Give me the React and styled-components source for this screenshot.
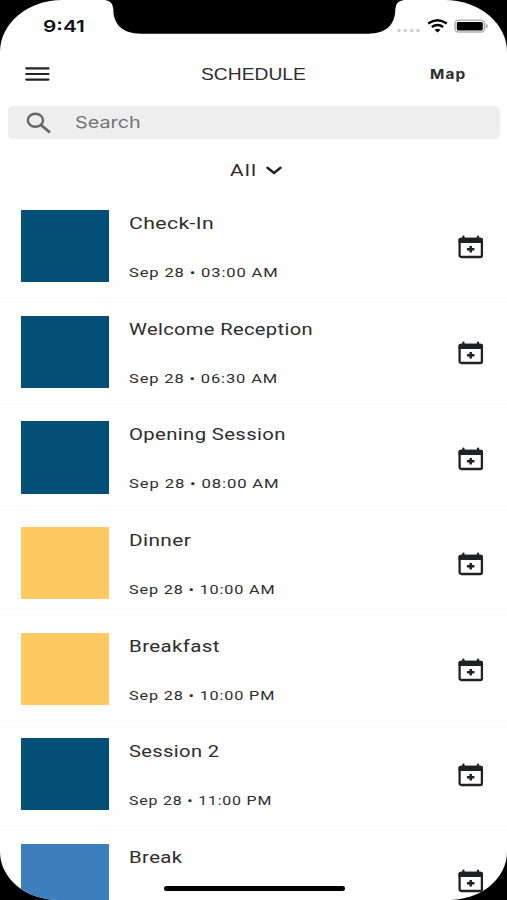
import React, { useLayoutEffect, useRef, useState } from 'react';
import styled, { createGlobalStyle } from 'styled-components';

const GlobalStyle = createGlobalStyle`
  * { box-sizing: border-box; }
  html, body { margin: 0; background: #000; overflow: hidden; }
`;

const Device = styled.div`
  position: relative;
  width: 507px;
  height: 900px;
  background: #000;
  overflow: hidden;
`;

const Screen = styled.main`
  display: flex;
  flex-direction: column;
  width: 507px;
  height: 900px;
  overflow: hidden;
  border-radius: 62px 62px 58px 58px / 52px 52px 48px 48px;
  background: #fefefe;
  color: #2d2d2d;
  font-family: Roboto, "Liberation Sans", sans-serif;
`;

const StatusBar = styled.header`
  display: flex;
  flex: none;
  justify-content: space-between;
  height: 52px;
  padding: 0 19px 0 43px;
`;

const Clock = styled.div`
  padding-top: 16px;
  font: 600 16.5px/21px Inter, sans-serif;
  color: #111;
`;

const StatusIcons = styled.svg`
  width: 92px;
  height: 22px;
  margin-top: 15px;
`;

const Notch = styled.svg`
  position: absolute;
  top: 0;
  left: 104px;
  width: 301px;
  height: 35px;
`;

const NavBar = styled.nav`
  display: grid;
  grid-template-columns: 1fr auto 1fr;
  align-items: center;
  flex: none;
  height: 44px;
  padding: 0 41px 0 25px;
`;

const MenuIcon = styled.svg`
  width: 25px;
  height: 16px;
`;

const NavTitle = styled.h1`
  margin: 0 0 0 16px;
  font: 400 16.5px/22px "Liberation Sans", sans-serif;
`;

const NavAction = styled.div`
  justify-self: end;
  font: 700 13.5px/20px Inter, sans-serif;
  letter-spacing: 1px;
`;

const SearchBox = styled.div`
  display: flex;
  align-items: center;
  flex: none;
  height: 33px;
  margin: 10px 7px 0 8px;
  padding-left: 18px;
  border-radius: 5px;
  background: #eee;
  color: #747474;
  font: 400 16.5px/21px Inter, sans-serif;
`;

const SearchIcon = styled.svg`
  width: 26px;
  height: 22px;
  margin-right: 23px;
`;

const Filter = styled.div`
  display: flex;
  align-items: center;
  justify-content: center;
  flex: none;
  gap: 9px;
  height: 54.4px;
  padding: 8px 0 0 5px;
  font-size: 17px;
  line-height: 22px;
  letter-spacing: 0.9px;
`;

const Chevron = styled.svg`
  width: 16px;
  height: 9px;
`;

const List = styled.ul`
  flex: none;
  margin: 0;
  padding: 0;
  list-style: none;
`;

const Row = styled.li`
  display: flex;
  height: 105.6px;
  padding: 16.8px 23px 0 21px;
  border-bottom: 1px solid #f9f9f9;
`;

const Swatch = styled.div`
  flex: none;
  width: 88px;
  height: 72.2px;
  background: ${({ $color }) => $color};
`;

const Details = styled.div`
  flex: 1;
  margin-left: 20px;
`;

const EventName = styled.div`
  height: 22px;
  margin-top: 2px;
  font-size: 17px;
  line-height: 22px;
  letter-spacing: 0.3px;
`;

const EventTime = styled.div`
  height: 18px;
  margin-top: 29px;
  font-size: 13.5px;
  line-height: 18px;
  letter-spacing: 0.7px;
`;

const CalendarIcon = styled.svg`
  flex: none;
  width: 26px;
  height: 24px;
  margin-top: 25.2px;
`;

const HomeIndicator = styled.div`
  position: absolute;
  left: 164px;
  bottom: 9px;
  width: 181px;
  height: 5.5px;
  border-radius: 3px;
  background: #000;
`;

const TextFrame = styled.span`
  display: block;
  width: ${({ $width }) => $width}px;
  white-space: nowrap;
`;

const TextInk = styled.span`
  display: inline-block;
  transform-origin: 0 50%;
`;

// Widens a label horizontally so that it fills its given width.
function WideText({ width, children }) {
  const ref = useRef(null);
  const [scale, setScale] = useState(1);
  useLayoutEffect(() => {
    const fit = () => ref.current && setScale(width / ref.current.offsetWidth);
    fit();
    document.fonts.ready.then(fit);
  }, [width, children]);
  return (
    <TextFrame $width={width}>
      <TextInk ref={ref} style={{ transform: `scaleX(${scale})` }}>{children}</TextInk>
    </TextFrame>
  );
}

const NAVY = '#034f75';
const AMBER = '#ffc962';
const BLUE = '#3b80bd';

const events = [
  { name: 'Check-In', nameWidth: 85, time: 'Sep 28 • 03:00 AM', timeWidth: 149.5, color: NAVY },
  { name: 'Welcome Reception', nameWidth: 184.5, time: 'Sep 28 • 06:30 AM', timeWidth: 149, color: NAVY },
  { name: 'Opening Session', nameWidth: 156.5, time: 'Sep 28 • 08:00 AM', timeWidth: 150.5, color: NAVY },
  { name: 'Dinner', nameWidth: 62.5, time: 'Sep 28 • 10:00 AM', timeWidth: 146.5, color: AMBER },
  { name: 'Breakfast', nameWidth: 90.5, time: 'Sep 28 • 10:00 PM', timeWidth: 146.5, color: AMBER },
  { name: 'Session 2', nameWidth: 90, time: 'Sep 28 • 11:00 PM', timeWidth: 143.5, color: NAVY },
  { name: 'Break', nameWidth: 54, color: BLUE },
];

function AddToCalendar() {
  return (
    <CalendarIcon viewBox="0 0 26 24" fill="none">
      <rect x="1.6" y="4" width="22.3" height="18" rx="1.6" stroke="#202124" strokeWidth="2.3" />
      <path d="M0.5 8V4.6Q0.5 2.7 2.5 2.7H4.3V1.5Q4.3 0.6 5.4 0.6Q6.6 0.6 6.6 1.5V2.7H18.9V1.5Q18.9 0.6 20 0.6Q21.2 0.6 21.2 1.5V2.7H23Q25 2.7 25 4.6V8Z" fill="#202124" />
      <path d="M12.7 11V17.4M9 14.2H16.4" stroke="#202124" strokeWidth="2.5" />
    </CalendarIcon>
  );
}

export default function App() {
  return (
    <Device>
      <GlobalStyle />
      <Screen>
        <StatusBar>
          <Clock><WideText width={41.5}>9:41</WideText></Clock>
          <StatusIcons viewBox="0 0 92 22">
            <g fill="#cbcbcb">
              <circle cx="3" cy="15.4" r="1.7" />
              <circle cx="9.3" cy="15.4" r="1.7" />
              <circle cx="15.6" cy="15.4" r="1.7" />
              <circle cx="21.9" cy="15.4" r="1.7" />
            </g>
            <g fill="none" stroke="#050505" strokeWidth="2.5">
              <path d="M32.2 8.6Q41.5 2 50.8 8.6" />
              <path d="M35.8 12Q41.5 8.1 47.2 12" />
            </g>
            <path d="M38.5 14.8Q41.5 12.7 44.5 14.8L41.5 17.5Z" fill="#050505" />
            <rect x="59" y="5.3" width="29.5" height="11.7" rx="3.4" fill="#fefefe" stroke="#b3b3b3" strokeWidth="1.6" />
            <rect x="60.8" y="7" width="26" height="8.5" rx="1.4" fill="#000" />
            <path d="M89.6 8.8Q92 9.3 92 11.1Q92 12.9 89.6 13.4Z" fill="#b3b3b3" />
          </StatusIcons>
        </StatusBar>
        <NavBar>
          <MenuIcon viewBox="0 0 25 16">
            <path d="M1.3 2.4H23.5M1.3 8H23.5M1.3 13.6H23.5" stroke="#242424" strokeWidth="2.2" strokeLinecap="round" />
          </MenuIcon>
          <NavTitle><WideText width={105}>SCHEDULE</WideText></NavTitle>
          <NavAction><WideText width={36.5}>Map</WideText></NavAction>
        </NavBar>
        <SearchBox>
          <SearchIcon viewBox="0 0 26 22" fill="none" stroke="#666" strokeWidth="2.4">
            <ellipse cx="9.4" cy="8.2" rx="7.6" ry="6.5" />
            <path d="M15 13L24 20.5" strokeWidth="2.9" />
          </SearchIcon>
          <WideText width={66}>Search</WideText>
        </SearchBox>
        <Filter>
          <WideText width={27}>All</WideText>
          <Chevron viewBox="0 0 16 9">
            <path d="M1.5 1.8L8 7L14.5 1.8" fill="none" stroke="#202124" strokeWidth="2.4" strokeLinecap="round" strokeLinejoin="round" />
          </Chevron>
        </Filter>
        <List>
          {events.map((event) => (
            <Row key={event.name}>
              <Swatch $color={event.color} />
              <Details>
                <EventName><WideText width={event.nameWidth}>{event.name}</WideText></EventName>
                {event.time && (
                  <EventTime><WideText width={event.timeWidth}>{event.time}</WideText></EventTime>
                )}
              </Details>
              <AddToCalendar />
            </Row>
          ))}
        </List>
      </Screen>
      <Notch viewBox="0 0 301 35">
        <path d="M1 0Q9 1 9.3 9C9.3 25 19 33.7 37 33.7H264C282 33.7 291.3 25 291.3 9Q291.6 1 300 0Z" fill="#000" />
      </Notch>
      <HomeIndicator />
    </Device>
  );
}
